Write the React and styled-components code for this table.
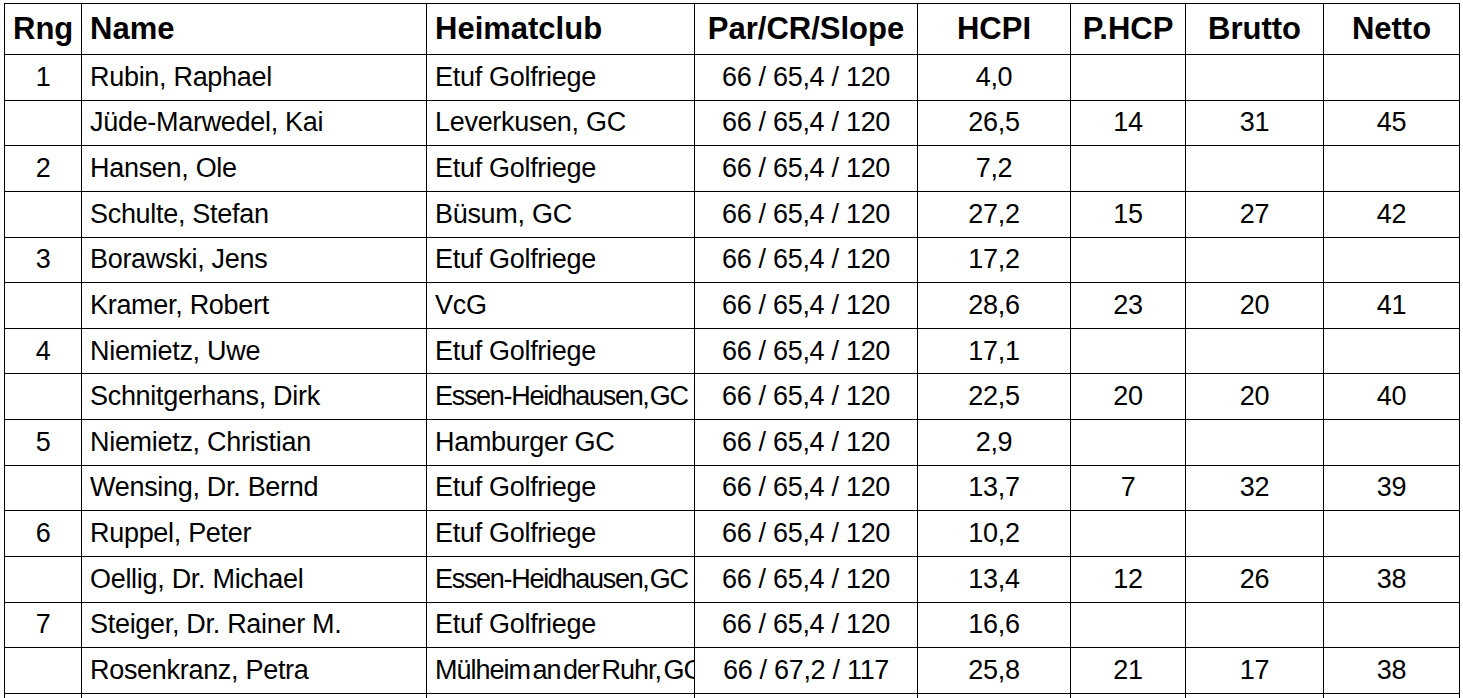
import styled, { createGlobalStyle } from 'styled-components';

const GlobalStyle = createGlobalStyle`
    html, body {
        margin: 0;
        padding: 0;
        background: #FFFFFF;
    }
    body {
        font-family: "Liberation Sans", Arial, sans-serif;
        color: #000000;
    }
`;

const Page = styled.div`
    padding: 3px 0 0 4px;
    height: 698px;
    overflow: hidden;
    box-sizing: border-box;
`;

const Table = styled.table`
    border-collapse: collapse;
    table-layout: fixed;
    width: 1455px;
`;

const HeadRow = styled.tr`
    height: 51px;
`;

const Row = styled.tr`
    height: 45.64px;
`;

const HeadCell = styled.th`
    border: 1px solid #000000;
    padding: 0 8px;
    font-size: 31px;
    font-weight: 700;
    text-align: ${({ $align }) => $align || 'center'};
    white-space: nowrap;
    overflow: hidden;
`;

// squeezed text the way the spreadsheet crams long club names into the cell
const spacing = {
    normal: { letter: '-0.3px', word: '0' },
    tight: { letter: '-1.3px', word: '-5px' },
    overflow: { letter: '-1px', word: '-4px' },
};

const Cell = styled.td`
    border: 1px solid #000000;
    padding: 0 8px;
    font-size: 27px;
    letter-spacing: ${({ $fit }) => spacing[$fit || 'normal'].letter};
    word-spacing: ${({ $fit }) => spacing[$fit || 'normal'].word};
    text-align: ${({ $align }) => $align || 'center'};
    white-space: nowrap;
    overflow: hidden;
    text-overflow: clip;
`;

const columns = [
    { key: 'rng', title: 'Rng', width: 77 },
    { key: 'name', title: 'Name', width: 345, align: 'left' },
    { key: 'club', title: 'Heimatclub', width: 268, align: 'left' },
    { key: 'par', title: 'Par/CR/Slope', width: 223 },
    { key: 'hcpi', title: 'HCPI', width: 153 },
    { key: 'phcp', title: 'P.HCP', width: 115 },
    { key: 'brutto', title: 'Brutto', width: 138 },
    { key: 'netto', title: 'Netto', width: 136 },
];

const STD = '66 / 65,4 / 120';

const rows = [
    { rng: '1', name: 'Rubin, Raphael', club: 'Etuf Golfriege', par: STD, hcpi: '4,0' },
    { name: 'Jüde-Marwedel, Kai', club: 'Leverkusen, GC', par: STD, hcpi: '26,5', phcp: '14', brutto: '31', netto: '45' },
    { rng: '2', name: 'Hansen, Ole', club: 'Etuf Golfriege', par: STD, hcpi: '7,2' },
    { name: 'Schulte, Stefan', club: 'Büsum, GC', par: STD, hcpi: '27,2', phcp: '15', brutto: '27', netto: '42' },
    { rng: '3', name: 'Borawski, Jens', club: 'Etuf Golfriege', par: STD, hcpi: '17,2' },
    { name: 'Kramer, Robert', club: 'VcG', par: STD, hcpi: '28,6', phcp: '23', brutto: '20', netto: '41' },
    { rng: '4', name: 'Niemietz, Uwe', club: 'Etuf Golfriege', par: STD, hcpi: '17,1' },
    { name: 'Schnitgerhans, Dirk', club: 'Essen-Heidhausen, GC', fit: 'tight', par: STD, hcpi: '22,5', phcp: '20', brutto: '20', netto: '40' },
    { rng: '5', name: 'Niemietz, Christian', club: 'Hamburger GC', par: STD, hcpi: '2,9' },
    { name: 'Wensing, Dr. Bernd', club: 'Etuf Golfriege', par: STD, hcpi: '13,7', phcp: '7', brutto: '32', netto: '39' },
    { rng: '6', name: 'Ruppel, Peter', club: 'Etuf Golfriege', par: STD, hcpi: '10,2' },
    { name: 'Oellig, Dr. Michael', club: 'Essen-Heidhausen, GC', fit: 'tight', par: STD, hcpi: '13,4', phcp: '12', brutto: '26', netto: '38' },
    { rng: '7', name: 'Steiger, Dr. Rainer M.', club: 'Etuf Golfriege', par: STD, hcpi: '16,6' },
    { name: 'Rosenkranz, Petra', club: 'Mülheim an der Ruhr, GC', fit: 'overflow', par: '66 / 67,2 / 117', hcpi: '25,8', phcp: '21', brutto: '17', netto: '38' },
    {},
];

function App() {
    return (
        <Page>
            <GlobalStyle />
            <Table>
                <colgroup>
                    {columns.map(col => (
                        <col key={col.key} style={{ width: col.width }} />
                    ))}
                </colgroup>
                <thead>
                    <HeadRow>
                        {columns.map(col => (
                            <HeadCell key={col.key} $align={col.align}>{col.title}</HeadCell>
                        ))}
                    </HeadRow>
                </thead>
                <tbody>
                    {rows.map((row, index) => (
                        <Row key={index}>
                            {columns.map(col => (
                                <Cell
                                    key={col.key}
                                    $align={col.align}
                                    $fit={col.key === 'club' ? row.fit : undefined}
                                >
                                    {row[col.key] || ''}
                                </Cell>
                            ))}
                        </Row>
                    ))}
                </tbody>
            </Table>
        </Page>
    );
}

export default App;
